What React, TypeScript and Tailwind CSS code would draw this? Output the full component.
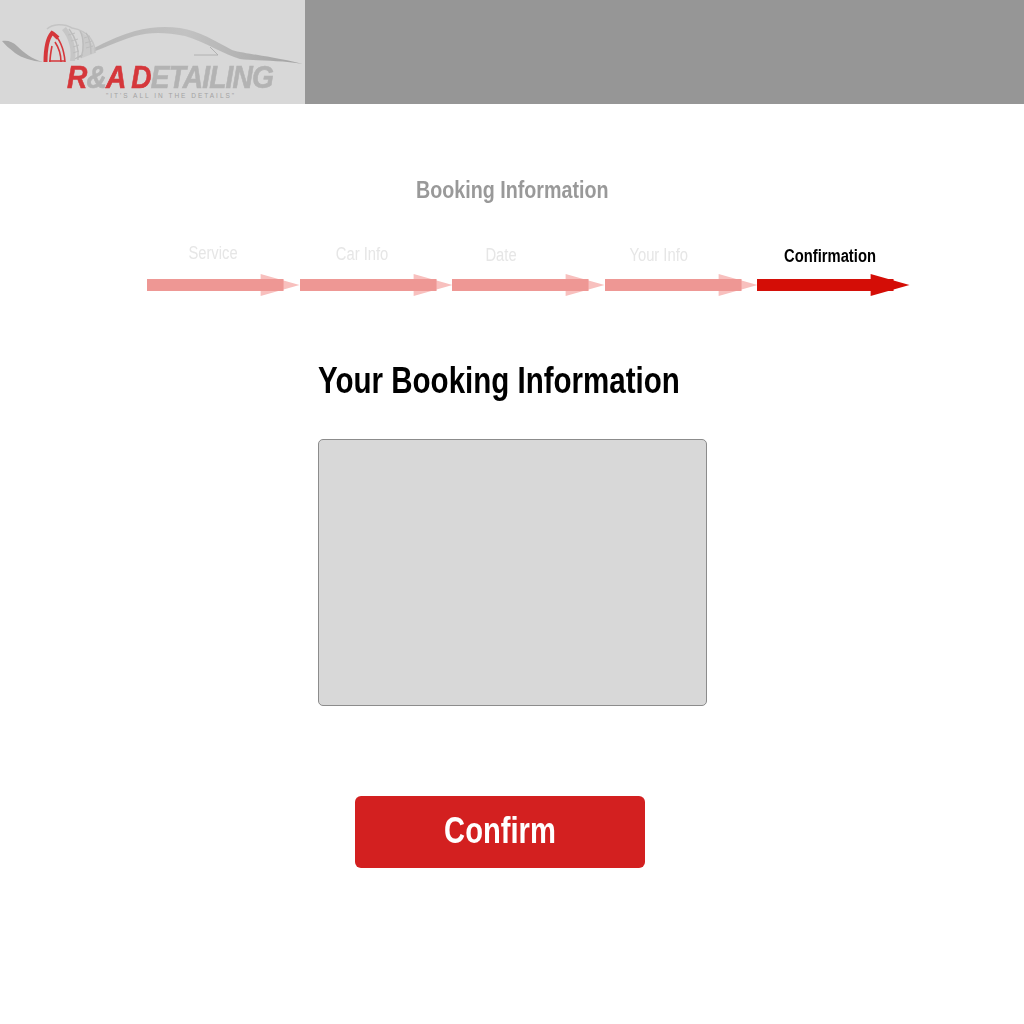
const steps = [
  { label: 'Service', className: 'w-[133px] pb-[4px]' },
  { label: 'Car Info', className: 'w-[164px] pb-[3px]' },
  { label: 'Date', className: 'w-[114px] pb-[2px]' },
  { label: 'Your Info', className: 'w-[202px] pb-[2px]' },
];

const Arrow = ({ done }: { done: boolean }) => (
  <svg viewBox="0 0 153 22" className="block h-[22px] w-[152.5px] shrink-0 overflow-visible">
    <polygon points="114,0 153,11 114,22" fill={done ? '#f8c0be' : '#d40d06'} />
    <rect x="0" y="5" width="137" height="12" fill={done ? '#ee9794' : '#d40d06'} />
  </svg>
);

const Logo = () => (
  <div className="relative h-[104px] w-[305px] shrink-0 overflow-hidden bg-[#d8d8d8]">
    <svg width="305" height="104" viewBox="0 0 305 104" className="absolute left-0 top-0 blur-[0.5px]">
      <defs>
        <linearGradient id="swoosh" x1="0" y1="0" x2="1" y2="0">
          <stop offset="0" stopColor="#b4b4b4" />
          <stop offset="0.5" stopColor="#c2c2c2" />
          <stop offset="1" stopColor="#a2a2a2" />
        </linearGradient>
      </defs>
      <path d="M2 41 C8 40 13 42 17 46 C24 53 32 59 43 62 C32 61 22 58 15 53 C9 48 5 45 2 41Z" fill="#a9a9a9" />
      <path
        d="M70 61 C85 53 110 38 135 31 C150 27 165 26 180 28 C200 31 215 41 232 50 C245 54 265 55 303 64 C280 60 255 61 240 59 C225 55 205 42 185 36 C165 32 150 32 135 36 C115 42 90 54 70 61Z"
        fill="url(#swoosh)"
      />
      <path d="M194 55 H218 L210 47" fill="none" stroke="#a8a8a8" strokeWidth="0.8" />
      <path d="M66 27 C73 36 77 48 75 61 L70 61 C72 50 69 38 62 30Z" fill="#c6c6c6" />
      <path d="M80 31 C87 35 94 44 95 53 L82 58 C84 48 83 38 80 31Z" fill="#cacaca" />
      <path d="M47 29 C52 24 64 23 72 28 C79 29 88 33 92 41 C95 46 95 50 95 53" fill="none" stroke="#c4c4c4" strokeWidth="1.6" />
      <path
        d="M69 29 C76 38 79 50 78 60 M80 31 C84 38 84 50 81 58 M86 33 C90 38 91 46 91 54"
        fill="none"
        stroke="#bcbcbc"
        strokeWidth="1.4"
      />
      <path
        d="M68 35 L75 33 M71 41 L78 39 M73 47 L79 45 M73 53 L79 51 M84 38 L90 36 M85 43 L92 41 M86 48 L93 46"
        fill="none"
        stroke="#bdbdbd"
        strokeWidth="1"
      />
      <path d="M45.5 62 C45.5 50 47 39 52 33 C54 34 56 36 58 38" fill="none" stroke="#d5373b" strokeWidth="4" />
      <path
        d="M52 33 C59 37 64 48 65 62 M55 42 C59 48 61 55 61 62 M52 46 C51 51 50 56 50 62 M49 61 L65 61"
        fill="none"
        stroke="#d5373b"
        strokeWidth="1.6"
      />
    </svg>
    <p className="absolute left-[67px] top-[63px] origin-left scale-x-[0.88] whitespace-nowrap font-['Liberation_Sans',sans-serif] text-[32px] leading-[28px] font-bold tracking-[-1px] text-[#b3b3b3] italic blur-[0.3px] [-webkit-text-stroke:0.6px_currentColor]">
      <span className="text-[#d5373b]">R</span>&amp;<span className="text-[#d5373b]">A D</span>ETAILING
    </p>
    <p className="absolute left-[106px] top-[92px] whitespace-nowrap font-['Liberation_Sans',sans-serif] text-[6.5px] leading-[8px] tracking-[2px] text-[#a3a3a3]">
      "IT'S ALL IN THE DETAILS"
    </p>
  </div>
);

export default function App() {
  return (
    <div className="min-h-[1024px] bg-white font-['Liberation_Sans',sans-serif]">
      <header className="flex h-[104px] bg-[#969696]">
        <Logo />
      </header>
      <main className="flex flex-col items-center">
        <h2 className="mt-[73px] scale-x-[0.82] whitespace-nowrap text-[24px] leading-[26px] font-bold text-[#999999]">
          Booking Information
        </h2>
        <div className="mt-[36px] flex h-[28px] items-end self-start pl-[147px]">
          {steps.map((step) => (
            <span key={step.label} className={`${step.className} text-center text-[18px] leading-[20px] text-[#e6e6e6]`}>
              <span className="inline-block scale-x-[0.82] whitespace-nowrap">{step.label}</span>
            </span>
          ))}
          <span className="w-[140px] pb-[2px] text-center text-[18px] leading-[18px] font-bold text-black">
            <span className="inline-block scale-x-[0.82] whitespace-nowrap">Confirmation</span>
          </span>
        </div>
        <div className="mt-[7px] flex self-start pl-[147px]">
          <Arrow done />
          <Arrow done />
          <Arrow done />
          <Arrow done />
          <Arrow done={false} />
        </div>
        <h1 className="mt-[63px] w-[388px] origin-left scale-x-[0.82] whitespace-nowrap text-[36px] leading-[44px] font-bold text-black">
          Your Booking Information
        </h1>
        <div className="mt-[36px] h-[267px] w-[389px] rounded-[5px] border border-[#8c8c8c] bg-[#d8d8d8]" />
        <button className="mt-[90px] ml-[-25px] h-[72px] w-[290px] rounded-[6px] bg-[#d32020] pb-[3px] text-[36px] font-bold text-white">
          <span className="inline-block scale-x-[0.81]">Confirm</span>
        </button>
      </main>
    </div>
  );
}
